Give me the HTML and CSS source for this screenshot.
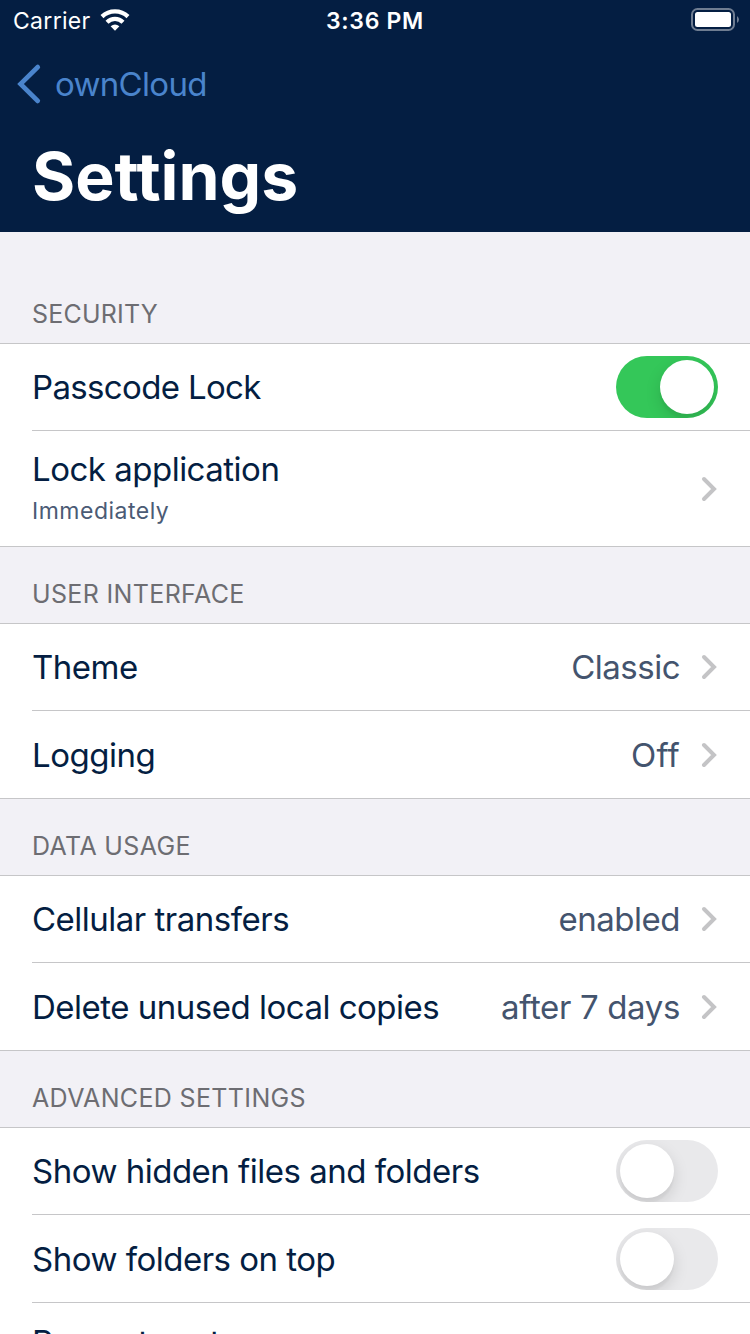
FILE: index.html
```
<!DOCTYPE html>
<html lang="en">
<head>
<meta charset="utf-8">
<title>Settings</title>
<link rel="stylesheet" href="styles.css">
</head>
<body>
<svg class="defs" width="0" height="0"><symbol id="chevron" viewBox="0 0 18 26"><path d="M4 3 L14 13 L4 23" fill="none" stroke="#c4c4c6" stroke-width="4" stroke-linecap="round" stroke-linejoin="miter"/></symbol></svg>
<header class="top">
  <div class="status">
    <div class="carrier"><span class="carrier-name">Carrier</span>
      <svg class="wifi" width="32" height="24" viewBox="0 0 32 24"><g fill="none" stroke="#fff" stroke-width="4.3"><path d="M2 8.6 A19 19 0 0 1 28 8.6"/><path d="M7 14.2 A11.5 11.5 0 0 1 23 14.2"/></g><path d="M10.6 18.2 Q15 14.6 19.4 18.2 L15 22.8Z" fill="#fff"/></svg>
    </div>
    <div class="time">3:36 PM</div>
    <svg class="battery" width="50" height="24" viewBox="0 0 50 24"><rect x="2" y="1" width="42" height="21" rx="5.5" fill="none" stroke="#6f7d91" stroke-width="2"/><rect x="5" y="4" width="36" height="15" rx="2.5" fill="#fff"/><path d="M47 8 Q49 9.5 49 11.5 T47 15Z" fill="#6f7d91"/></svg>
  </div>
  <nav class="back"><svg width="30" height="44" viewBox="0 0 30 44"><path d="M21.8 5 L4.5 22 L21.8 39" fill="none" stroke="#4a84cc" stroke-width="4.6" stroke-linecap="round" stroke-linejoin="miter"/></svg><span class="back-label">ownCloud</span></nav>
  <h1 class="title">Settings</h1>
</header>
<main>
  <h2 class="head head-first">SECURITY</h2>
  <section class="group">
    <div class="row"><span class="label label-tight">Passcode Lock</span><span class="switch on"><span class="knob"></span></span></div>
    <div class="row tall"><div class="stack"><span class="label">Lock application</span><span class="sub">Immediately</span></div><svg class="chev"><use href="#chevron"/></svg></div>
  </section>
  <h2 class="head">USER INTERFACE</h2>
  <section class="group">
    <div class="row"><span class="label">Theme</span><span class="value">Classic</span><svg class="chev"><use href="#chevron"/></svg></div>
    <div class="row last"><span class="label">Logging</span><span class="value value-off">Off</span><svg class="chev"><use href="#chevron"/></svg></div>
  </section>
  <h2 class="head">DATA USAGE</h2>
  <section class="group">
    <div class="row"><span class="label">Cellular transfers</span><span class="value">enabled</span><svg class="chev"><use href="#chevron"/></svg></div>
    <div class="row last"><span class="label">Delete unused local copies</span><span class="value value-after">after 7 days</span><svg class="chev"><use href="#chevron"/></svg></div>
  </section>
  <h2 class="head">ADVANCED SETTINGS</h2>
  <section class="group">
    <div class="row"><span class="label">Show hidden files and folders</span><span class="switch"><span class="knob"></span></span></div>
    <div class="row last"><span class="label">Show folders on top</span><span class="switch"><span class="knob"></span></span></div>
    <div class="row partial"><span class="label">Prevent system</span></div>
  </section>
</main>
</body>
</html>
```
FILE: styles.css
```
* { box-sizing: border-box; }
html { overflow: hidden; }
body { margin: 0; width: 750px; height: 1334px; overflow: hidden; background: #f2f1f6; font-family: Inter, "Liberation Sans", sans-serif; color: #041e42; }
.defs { display: none; }
.top { height: 232px; background: #041e42; color: #fff; }
.status { height: 40px; display: grid; grid-template-columns: 1fr auto 1fr; align-items: center; font-size: 23px; }
.carrier { display: flex; align-items: center; padding-left: 13px; gap: 9px; letter-spacing: 0.3px; }
.carrier-name, .time { padding-top: 2px; }
.time { font-weight: 600; letter-spacing: 0.7px; }
.battery { justify-self: end; margin-right: 10px; }
.back { height: 88px; display: flex; align-items: center; padding-left: 16px; gap: 9px; color: #4a84cc; font-size: 33px; letter-spacing: -0.7px; }
.title { margin: 0; height: 104px; padding: 0 0 7px 32px; display: flex; align-items: center; font-size: 66px; font-weight: 700; line-height: 95px; letter-spacing: 0; }
.head { margin: 0; height: 76px; padding: 31px 32px 0; font-size: 25px; line-height: 32px; font-weight: 400; letter-spacing: 0.35px; color: #6d6d72; }
.head-first { height: 111px; padding-top: 66px; letter-spacing: 0.2px; }
.group { background: #fff; border-top: 1px solid #c6c6c8; }
.row { position: relative; height: 87px; padding: 0 32px 1px; display: flex; align-items: center; justify-content: space-between; font-size: 33px; line-height: 42px; letter-spacing: -0.5px; }
.row::after { content: ""; position: absolute; left: 32px; right: 0; bottom: 0; height: 1px; background: #c6c6c8; }
.row:last-child::after { left: 0; }
.last { height: 88px; padding-bottom: 0; }
.tall { height: 116px; padding-bottom: 0; }
.partial { height: 31px; padding: 18px 32px 0; align-items: flex-start; overflow: hidden; white-space: nowrap; letter-spacing: -0.35px; }
.partial::after { display: none; }
.label-tight { letter-spacing: -0.65px; }
.stack { display: flex; flex-direction: column; }
.sub { height: 40px; padding-top: 1px; font-size: 23px; line-height: 40px; color: #4b5b75; letter-spacing: 0.5px; }
.value { margin-left: auto; margin-right: 20px; color: #44546e; }
.value-off { letter-spacing: 0.2px; }
.value-after { letter-spacing: -0.35px; }
.chev { width: 18px; height: 26px; flex: none; }
.switch { width: 102px; height: 62px; padding: 4px; border-radius: 31px; background: #e9e9eb; display: flex; overflow: hidden; flex: none; }
.on { background: #34c759; justify-content: flex-end; }
.knob { width: 54px; height: 54px; border-radius: 50%; background: #fff; box-shadow: 0 6px 16px rgba(0,0,0,.13), 0 5px 2px rgba(0,0,0,.03); }
```
